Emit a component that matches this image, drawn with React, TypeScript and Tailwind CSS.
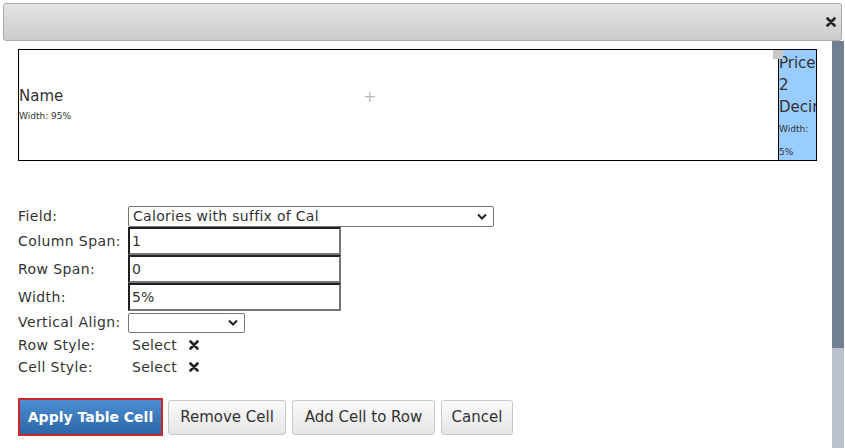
import React from "react";

function Label({ children }: { children: React.ReactNode }) {
  return <div className="w-[110px] shrink-0 whitespace-nowrap tracking-[0.4px]">{children}</div>;
}

function TextBox({ value }: { value: string }) {
  return (
    <div className="w-[213px] h-[28px] border-2 border-t-[#1f1f1f] border-l-[#1f1f1f] border-r-[#767676] border-b-[#767676] px-[2px] leading-[24px] bg-white">
      {value}
    </div>
  );
}

function Chevron() {
  return (
    <svg width="10" height="7" viewBox="0 0 10 7" className="shrink-0">
      <path d="M1 1.5 L5 5.5 L9 1.5" fill="none" stroke="#222" strokeWidth="2" />
    </svg>
  );
}

function Cross() {
  return (
    <svg width="10" height="10" viewBox="0 0 10 10">
      <path d="M1.5 1.5 L8.5 8.5 M8.5 1.5 L1.5 8.5" stroke="#222" strokeWidth="2.6" strokeLinecap="round" />
    </svg>
  );
}

function GrayButton({ children, w }: { children: React.ReactNode; w: string }) {
  return (
    <div
      className={`${w} h-[35px] rounded-[3px] border border-[#c8c8c8] bg-gradient-to-b from-[#fafafa] to-[#e6e6e6] flex items-center justify-center text-[#333] text-[15px]`}
    >
      {children}
    </div>
  );
}

export default function App() {
  return (
    <div
      className="w-[845px] h-[448px] bg-white overflow-hidden relative text-[#333]"
      style={{ fontFamily: '"DejaVu Sans", Verdana, sans-serif' }}
    >
      {/* title bar */}
      <div className="mx-[3px] mt-[3px] h-[38px] rounded-[3px] border border-[#aaa] bg-gradient-to-b from-[#e4e4e4] to-[#cbcbcb] flex items-center justify-end pr-[5px]">
        <Cross />
      </div>

      <div className="flex">
        <div className="flex-1 pl-[18px] pr-[15px] pt-[8px]">
          {/* table preview */}
          <div className="h-[112px] border border-black flex">
            <div className="flex-1 relative flex flex-col justify-center">
              <div className="text-[15px] leading-[20px] -mt-[1px]">Name</div>
              <div className="text-[9px] leading-[14px] mt-[3px]">Width: 95%</div>
              <div className="absolute left-[344px] top-[35px] text-[#bbb] text-[16px]">+</div>
              <div className="absolute right-[-5px] top-0 w-[10px] h-[9px] bg-[#c8c8c8]" />
            </div>
            <div className="w-[38px] bg-[#99ccff] border-l border-black overflow-hidden text-[#333] pt-[2px]">
              <div className="text-[15px] leading-[22px] whitespace-nowrap">Price</div>
              <div className="text-[15px] leading-[22px]">2</div>
              <div className="text-[15px] leading-[22px] whitespace-nowrap">Decimal</div>
              <div className="text-[9px] leading-[23px]">Width:</div>
              <div className="text-[9px] leading-[23px]">5%</div>
            </div>
          </div>

          {/* form */}
          <div className="mt-[45px] text-[14px] flex flex-col">
            <div className="flex items-center h-[21px]">
              <Label>Field:</Label>
              <div className="w-[366px] h-[21px] border border-[#767676] rounded-[2px] flex items-center justify-between pl-[4px] pr-[6px]">
                <span className="tracking-[0.3px]">Calories with suffix of Cal</span>
                <Chevron />
              </div>
            </div>
            <div className="flex items-center">
              <Label>Column Span:</Label>
              <TextBox value="1" />
            </div>
            <div className="flex items-center">
              <Label>Row Span:</Label>
              <TextBox value="0" />
            </div>
            <div className="flex items-center">
              <Label>Width:</Label>
              <TextBox value="5%" />
            </div>
            <div className="flex items-center h-[23px]">
              <Label>Vertical Align:</Label>
              <div className="w-[117px] h-[20px] border border-[#767676] rounded-[2px] flex items-center justify-end pr-[6px]">
                <Chevron />
              </div>
            </div>
            <div className="flex items-center h-[22px]">
              <Label>Row Style:</Label>
              <span className="ml-[4px] tracking-[0.3px]">Select</span>
              <span className="ml-[12px] flex"><Cross /></span>
            </div>
            <div className="flex items-center h-[22px]">
              <Label>Cell Style:</Label>
              <span className="ml-[4px] tracking-[0.3px]">Select</span>
              <span className="ml-[12px] flex"><Cross /></span>
            </div>
          </div>

          {/* buttons */}
          <div className="mt-[20px] flex items-center">
            <div className="w-[145px] h-[38px] border-2 border-[#d2232a] bg-gradient-to-b from-[#4b8dd3] to-[#2c68a8] flex items-center justify-center text-white text-[14px] font-bold">
              Apply Table Cell
            </div>
            <div className="ml-[5px]"><GrayButton w="w-[118px]">Remove Cell</GrayButton></div>
            <div className="ml-[6px]"><GrayButton w="w-[143px]">Add Cell to Row</GrayButton></div>
            <div className="ml-[6px]"><GrayButton w="w-[72px]">Cancel</GrayButton></div>
          </div>
        </div>

        {/* scrollbar */}
        <div className="w-[12px] mr-[1px] h-[407px] flex flex-col">
          <div className="h-[307px] bg-[#708090]" />
          <div className="flex-1 bg-[#b9c2ca]" />
        </div>
      </div>
    </div>
  );
}
